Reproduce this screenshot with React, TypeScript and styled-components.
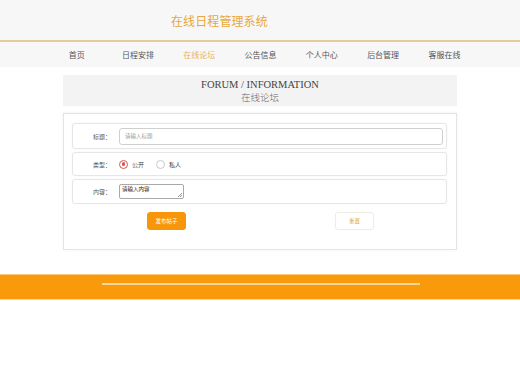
import React from "react";
import styled, { createGlobalStyle } from "styled-components";

const Global = createGlobalStyle`
  html, body { margin: 0; padding: 0; background: #fff; }
  body { font-family: "Noto Sans CJK SC", "Noto Sans", sans-serif; color: #333; }
  * { box-sizing: border-box; }
`;

const Page = styled.div`
  width: 520px;
  min-height: 390px;
  display: flex;
  flex-direction: column;
`;

const TopBar = styled.header`
  height: 42px;
  background: #f7f7f7;
  display: flex;
  align-items: center;
  padding-left: 171px;
  border-bottom: 2px solid #e6cc9a;
`;

const SiteTitle = styled.h1`
  margin: 0;
  font-size: 12px;
  font-weight: 400;
  color: #e8a640;
  letter-spacing: 0.1px;
`;

const Nav = styled.nav`
  height: 25px;
  background: #f7f7f7;
  display: flex;
  align-items: center;
  padding-left: 46px;
`;

const NavItem = styled.a<{ $active?: boolean }>`
  width: 61.3px;
  text-align: center;
  font-size: 8px;
  color: ${(p) => (p.$active ? "#e8b25e" : "#555")};
  text-decoration: none;
`;

const Main = styled.main`
  width: 394px;
  margin: 8px auto 0;
  display: flex;
  flex-direction: column;
  gap: 7px;
`;

const Heading = styled.div`
  height: 31px;
  background: #f3f3f3;
  display: flex;
  flex-direction: column;
  align-items: center;
  justify-content: center;
  line-height: 12px;
`;

const HeadingEn = styled.div`
  font-family: "Liberation Serif", serif;
  font-size: 10.5px;
  color: #444;
`;

const HeadingCn = styled.div`
  font-size: 9.5px;
  color: #666;
  font-weight: 300;
`;

const Card = styled.form`
  border: 1px solid #e4e4e4;
  box-shadow: 0 0 3px rgba(0, 0, 0, 0.06);
  background: #fff;
  padding: 9px 9px 0 8px;
  height: 137px;
  display: flex;
  flex-direction: column;
  gap: 3px;
`;

const Row = styled.div<{ $h: number }>`
  height: ${(p) => p.$h}px;
  border: 1px solid #e6e6e6;
  border-radius: 3px;
  box-shadow: 0 0 2px rgba(0, 0, 0, 0.05);
  display: flex;
  align-items: center;
  padding-left: 20px;
  padding-right: 3px;
`;

const Label = styled.label`
  width: 26px;
  font-size: 6px;
  color: #555;
  white-space: nowrap;
`;

const TextInput = styled.input`
  flex: 1;
  height: 17px;
  border: 1px solid #cfcfcf;
  border-radius: 3px;
  padding: 0 5px;
  font-size: 5.5px;
  font-family: inherit;
  outline: none;
  &::placeholder { color: #999; }
`;

const RadioGroup = styled.div`
  display: flex;
  align-items: center;
`;

const RadioOption = styled.span`
  display: flex;
  align-items: center;
  gap: 4px;
  font-size: 6px;
  color: #444;
  margin-right: 12px;
`;

const RadioCircle = styled.span<{ $checked?: boolean }>`
  width: 9px;
  height: 9px;
  border-radius: 50%;
  border: 1px solid ${(p) => (p.$checked ? "#d9534f" : "#c8c8c8")};
  display: flex;
  align-items: center;
  justify-content: center;
  background: #fff;
  &::after {
    content: "";
    width: 3.5px;
    height: 3.5px;
    border-radius: 50%;
    background: ${(p) => (p.$checked ? "#d9534f" : "transparent")};
  }
`;

const TextArea = styled.div`
  position: relative;
  width: 65px;
  height: 15px;
  border: 1px solid #a9a9a9;
  border-radius: 2px;
  font-size: 5.5px;
  color: #222;
  padding: 1px 2px;
  line-height: 7px;
  margin-top: -1px;
  &::after {
    content: "";
    position: absolute;
    right: 1px;
    bottom: 1px;
    width: 4px;
    height: 4px;
    background: linear-gradient(135deg, transparent 45%, #999 45%, #999 55%, transparent 55%, transparent 70%, #999 70%, #999 80%, transparent 80%);
  }
`;

const Buttons = styled.div`
  display: flex;
  padding-left: 75px;
  margin-top: 5px;
  gap: 149px;
`;

const Button = styled.button<{ $primary?: boolean }>`
  width: 39px;
  height: 18px;
  border-radius: 3px;
  font-size: 5.5px;
  font-family: inherit;
  cursor: pointer;
  border: 1px solid ${(p) => (p.$primary ? "#f7960a" : "#f3ede0")};
  background: ${(p) => (p.$primary ? "#f7960a" : "#fff")};
  color: ${(p) => (p.$primary ? "#fff" : "#e0a53a")};
  box-shadow: ${(p) => (p.$primary ? "none" : "0 0 2px rgba(0,0,0,0.04)")};
`;

const Footer = styled.footer`
  margin-top: 24px;
  height: 26px;
  background: #f99a0c;
  border-top: 1px solid #ffc878;
  border-bottom: 1px solid #ffd69a;
  display: flex;
  align-items: flex-start;
  padding-top: 8px;
  padding-left: 102px;
`;

const FooterLine = styled.div`
  width: 318px;
  height: 1.5px;
  background: #f8d796;
`;

const navItems = ["首页", "日程安排", "在线论坛", "公告信息", "个人中心", "后台管理", "客服在线"];

export default function App() {
  return (
    <Page>
      <Global />
      <TopBar>
        <SiteTitle>在线日程管理系统</SiteTitle>
      </TopBar>
      <Nav>
        {navItems.map((n) => (
          <NavItem key={n} $active={n === "在线论坛"}>
            {n}
          </NavItem>
        ))}
      </Nav>
      <Main>
        <Heading>
          <HeadingEn>FORUM / INFORMATION</HeadingEn>
          <HeadingCn>在线论坛</HeadingCn>
        </Heading>
        <Card onSubmit={(e) => e.preventDefault()}>
          <Row $h={26}>
            <Label>标题：</Label>
            <TextInput placeholder="请输入标题" />
          </Row>
          <Row $h={24}>
            <Label>类型：</Label>
            <RadioGroup>
              <RadioOption>
                <RadioCircle $checked />
                公开
              </RadioOption>
              <RadioOption>
                <RadioCircle />
                私人
              </RadioOption>
            </RadioGroup>
          </Row>
          <Row $h={25}>
            <Label>内容：</Label>
            <TextArea>请输入内容</TextArea>
          </Row>
          <Buttons>
            <Button $primary type="submit">发布帖子</Button>
            <Button type="reset">重置</Button>
          </Buttons>
        </Card>
      </Main>
      <Footer>
        <FooterLine />
      </Footer>
    </Page>
  );
}
